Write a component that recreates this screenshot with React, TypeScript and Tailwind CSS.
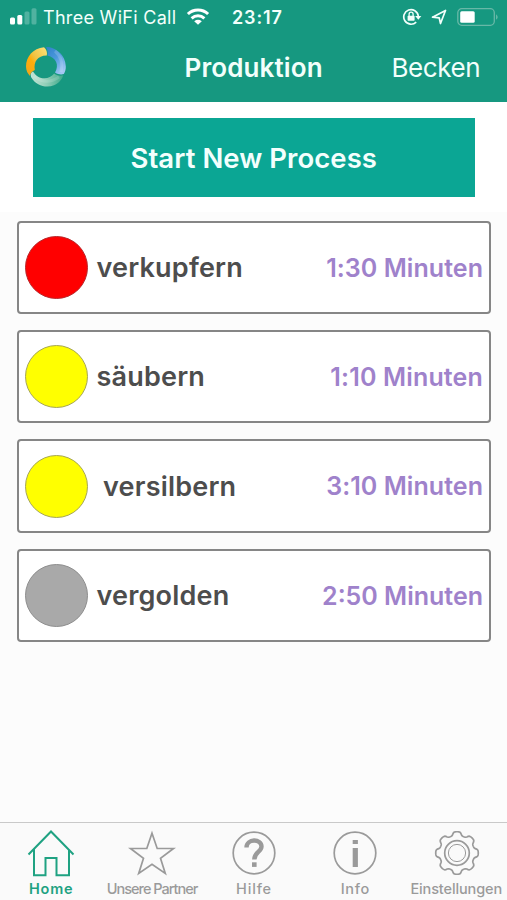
import type { ReactNode } from "react";

const steps = [
  { name: "verkupfern", time: "1:30 Minuten", dot: "bg-[#ff0000] border-[#b8282c]", nameStyle: "ml-[9px] tracking-[0.2px]", timeStyle: "tracking-[0.06px]" },
  { name: "säubern", time: "1:10 Minuten", dot: "bg-[#ffff00] border-[#a5a55a]", nameStyle: "ml-[9px] tracking-[0.2px]", timeStyle: "tracking-[0.16px]" },
  { name: "versilbern", time: "3:10 Minuten", dot: "bg-[#ffff00] border-[#a5a55a]", nameStyle: "ml-[15.5px] tracking-[0.2px]", timeStyle: "tracking-[0.06px]" },
  { name: "vergolden", time: "2:50 Minuten", dot: "bg-[#a9a9a9] border-[#8e8e8e]", nameStyle: "ml-[9px] tracking-[0.2px]", timeStyle: "tracking-[0px]" },
];

const gearPath =
  Array.from({ length: 160 }, (_, i) => {
    const a = (i / 160) * Math.PI * 2;
    const r = 19.4 + 1.9 * Math.tanh(2 * Math.cos(8 * a) + 0.3);
    return `${i ? "L" : "M"}${(24 + r * Math.sin(a)).toFixed(2)} ${(24 - r * Math.cos(a)).toFixed(2)}`;
  }).join("") + "Z";

function Signal() {
  return (
    <svg width="27" height="18" viewBox="0 0 27 18" fill="#fff">
      <rect x="0" y="9.5" width="5" height="7" rx="1.5" />
      <rect x="7.3" y="7" width="5" height="9.5" rx="1.5" />
      <rect x="14.5" y="3.5" width="5" height="13" rx="1.5" opacity=".25" />
      <rect x="21.5" y="0.3" width="5" height="16.2" rx="1.5" opacity=".25" />
    </svg>
  );
}

function Wifi() {
  return (
    <svg width="24" height="18" viewBox="0 0 24 18" fill="none" stroke="#fff" strokeWidth="3">
      <path d="M1.9 6C7.5.6 16.5.6 22.1 6" />
      <path d="M5.6 10.3C9.3 7 14.7 7 18.4 10.3" />
      <path d="M12 16.8L8.2 13.2Q12 10.4 15.8 13.2Z" fill="#fff" stroke="none" />
    </svg>
  );
}

function Logo() {
  return (
    <svg width="42" height="42" viewBox="0 0 42 42">
      <defs>
        <linearGradient id="gold" x1="1" y1="0" x2="0" y2="1">
          <stop offset="0" stopColor="#ffe27a" />
          <stop offset=".45" stopColor="#f2c343" />
          <stop offset=".6" stopColor="#ffad0a" />
          <stop offset="1" stopColor="#eda51d" />
        </linearGradient>
        <linearGradient id="blue" x1="0" y1="0" x2=".7" y2="1">
          <stop offset="0" stopColor="#2e80c8" />
          <stop offset=".5" stopColor="#4b98dd" />
          <stop offset="1" stopColor="#a3c7f3" />
        </linearGradient>
        <linearGradient id="mint" x1="0" y1="0" x2="1" y2="0">
          <stop offset="0" stopColor="#c3e4d5" />
          <stop offset=".5" stopColor="#8dcdb6" />
          <stop offset="1" stopColor="#3da98a" />
        </linearGradient>
      </defs>
      <path d="M19 1.2C8 2 1 10.8 1 20.5c0 4 1.7 7.2 4 9.5.2-2.4 1.5-4.5 4.8-6C8.5 16 12.5 9.5 21.8 9.6 22.5 6.5 21.5 3 19 1.2Z" fill="url(#gold)" />
      <path d="M21 1c10 0 19.5 8 19.8 19.5.1 3-.8 6-2 7.5-2.2.8-5.5.7-8.8-1.5C34.5 19 31 11.5 22.5 9.5 23 6 22.5 3.5 21 1Z" fill="url(#blue)" />
      <path d="M8 25.5C5.5 27 5.3 29 6.3 31.5 11 39.5 21 42.5 29 39.3c4.5-2 8-5.5 9.2-10-3.5.9-6.5.3-9-1.7C24 34.5 13 34 8 25.5Z" fill="url(#mint)" />
      <path d="M30 5c6 5 8 12 6 21" stroke="#fff" strokeOpacity=".16" strokeWidth="3" fill="none" />
      <path d="M9 30c7 6 16 7 25 1" stroke="#fff" strokeOpacity=".15" strokeWidth="3" fill="none" />
    </svg>
  );
}

function Tab({ label, labelStyle, active, children }: { label: string; labelStyle: string; active?: boolean; children: ReactNode }) {
  return (
    <div className={`flex w-[101.4px] shrink-0 flex-col items-center pt-[6px] ${active ? "text-[#1fa282]" : "text-[#9a9a9a]"}`}>
      <svg className="ml-[0.5px]" width="48" height="48" viewBox="0 0 48 48" fill="none" stroke="currentColor" strokeWidth="1.7">
        {children}
      </svg>
      <span className={`mt-[3px] whitespace-nowrap leading-[18px] ${labelStyle}`}>{label}</span>
    </div>
  );
}

export default function App() {
  return (
    <div className="flex h-[900px] w-[507px] flex-col overflow-hidden bg-[#fcfcfc] font-['Inter','Liberation_Sans',sans-serif]">
      <header className="h-[102px] shrink-0 bg-[#169880] text-[#f2fffb]">
        <div className="flex h-[34px] items-center pl-[10px]">
          <Signal />
          <span className="ml-[6px] w-[134px] whitespace-nowrap text-[18px] tracking-[0.3px]">Three WiFi Call</span>
          <span className="ml-[9px]"><Wifi /></span>
          <span className="ml-[22px] w-[52px] whitespace-nowrap text-[18px] font-semibold tracking-[0.9px]">23:17</span>
          <svg className="ml-[118px]" width="20" height="18" viewBox="0 0 20 18" fill="none" stroke="currentColor" strokeWidth="1.7">
            <path d="M14.2 14.1A7.3 7.3 0 1 1 16.3 8" />
            <path d="M13.2 8H19.4L16.3 11.7Z" fill="currentColor" stroke="none" />
            <rect x="5.6" y="7.8" width="7" height="4.9" rx=".6" fill="currentColor" stroke="none" />
            <path d="M7.1 8V6.2a2 2 0 0 1 4 0V8" strokeWidth="1.3" />
          </svg>
          <svg className="ml-[9px]" width="17" height="18" viewBox="0 0 17 18" fill="none" stroke="currentColor" strokeWidth="1.7" strokeLinejoin="round">
            <path d="M1.5 9.2L14.5 2.5L9.5 15.5L8.2 9.8Z" />
          </svg>
          <svg className="ml-[9px]" width="43" height="20" viewBox="0 0 43 20">
            <rect x=".8" y="1.7" width="36.5" height="16.6" rx="4" fill="none" stroke="#68b8a7" strokeWidth="1.3" />
            <rect x="3.2" y="4.2" width="14.5" height="11.6" rx="1.5" fill="#fff" />
            <path d="M39.2 7.2q2.8 2.8 0 5.6Z" fill="#75bfae" />
          </svg>
        </div>
        <div className="flex h-[66px] items-center pl-[25px]">
          <Logo />
          <h1 className="ml-[117.5px] w-[150px] whitespace-nowrap text-[26px] font-semibold tracking-[0.12px]">Produktion</h1>
          <span className="ml-[57px] whitespace-nowrap text-[26px] tracking-[-0.4px]">Becken</span>
        </div>
      </header>

      <div className="flex h-[109.5px] shrink-0 bg-white pl-[32.5px] pt-[16.3px]">
        <button className="h-[78.7px] w-[442.5px] whitespace-nowrap bg-[#0ba694] pt-[2px] text-[27.5px] font-semibold tracking-[0.05px] text-[#f3fffd]">Start New Process</button>
      </div>

      <main className="flex flex-1 flex-col gap-[16px] pl-[16.5px] pr-[16px] pt-[9.3px]">
        {steps.map((s) => (
          <div key={s.name} className="flex h-[93.3px] items-center rounded-[4px] border-[2px] border-[#868686] bg-white pl-[6px] pr-[6px]">
            <div className={`size-[63px] shrink-0 rounded-full border ${s.dot}`} />
            <span className={`whitespace-nowrap pt-[2px] text-[27px] font-[570] text-[#4d4d4d] ${s.nameStyle}`}>{s.name}</span>
            <span className={`ml-auto whitespace-nowrap pt-[2px] text-[25px] font-[570] text-[#9f82cb] ${s.timeStyle}`}>{s.time}</span>
          </div>
        ))}
      </main>

      <nav className="flex h-[78.5px] shrink-0 border-t border-[#c9c9c9] bg-[#fafafa]">
        <Tab active label="Home" labelStyle="text-[14.5px] font-semibold tracking-[0.8px] ml-[1px]">
          <path d="M1.5 25.5L24 2.5L46.5 25.5M7 20.5V46.3H18.5V29H29.5V46.3H42V20.5" strokeWidth="2" />
        </Tab>
        <Tab label="Unsere Partner" labelStyle="text-[14.5px] font-medium tracking-[-1px]">
          <path d="M24 4.2L29.2 19.5H45.5L32.5 29.2L37.3 44.5L24 35.3L10.7 44.5L15.5 29.2L2.5 19.5H18.8Z" />
        </Tab>
        <Tab label="Hilfe" labelStyle="text-[14.5px] font-medium tracking-[0.85px] ml-[1px]">
          <circle cx="24" cy="24" r="20.8" />
          <path d="M16.5 18.4C16.5 9.5 31.5 9.3 31.5 17.5C31.5 23 24.3 23.2 24.3 30.5" strokeWidth="4.4" />
          <rect x="22" y="33.3" width="4.6" height="4.6" fill="currentColor" stroke="none" />
        </Tab>
        <Tab label="Info" labelStyle="text-[14.5px] font-medium tracking-[0.7px] ml-[1px]">
          <circle cx="24" cy="24" r="20.8" />
          <path d="M24.3 11V15M24.3 19V38" strokeWidth="5.2" />
        </Tab>
        <Tab label="Einstellungen" labelStyle="text-[14.5px] font-medium tracking-[-0.12px]">
          <path d={gearPath} />
          <circle cx="24" cy="24" r="12.3" />
          <circle cx="24" cy="24" r="8.6" strokeWidth="1" />
        </Tab>
      </nav>
    </div>
  );
}
